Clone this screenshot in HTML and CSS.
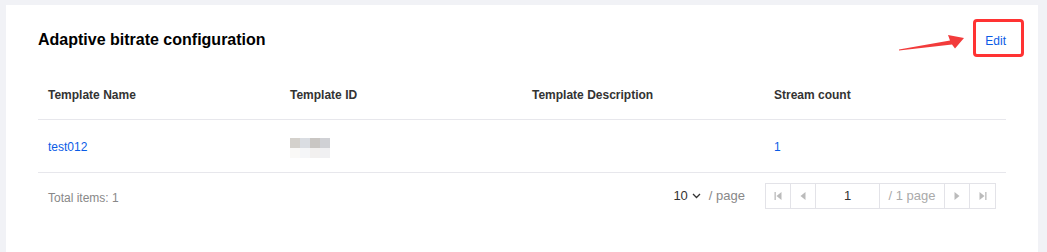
FILE: index.html
```html
<!DOCTYPE html>
<html>
<head>
<meta charset="utf-8">
<link rel="stylesheet" href="styles.css">
</head>
<body>
<div class="card">
  <div class="card-head">
    <h2 class="title">Adaptive bitrate configuration</h2>
    <a class="edit" href="#">Edit</a>
    <div class="mark-box"></div>
    <svg class="mark-arrow" width="70" height="24" viewBox="0 0 70 24">
      <polygon points="0,16.5 51,7.5 49,2 65,5 56,15.5 53,11.5 0,17.5" fill="#f23b3b"/>
    </svg>
  </div>
  <table class="tbl">
    <thead>
      <tr><th>Template Name</th><th>Template ID</th><th>Template Description</th><th>Stream count</th></tr>
    </thead>
    <tbody>
      <tr>
        <td><a class="link" href="#">test012</a></td>
        <td><span class="mosaic"><i class="m1"></i><i class="m2"></i><i class="m3"></i><i class="m4"></i><i class="m5"></i><i class="m6"></i><i class="m7"></i><i class="m8"></i></span></td>
        <td></td>
        <td><a class="link" href="#">1</a></td>
      </tr>
    </tbody>
  </table>
  <div class="footer">
    <span class="total">Total items: 1</span>
    <div class="pager">
      <span class="size">10 <svg width="9" height="6" viewBox="0 0 9 6"><path d="M1 1l3.5 3.5L8 1" stroke="#333" stroke-width="1.3" fill="none"/></svg></span>
      <span class="per">/ page</span>
      <div class="pbox">
        <span class="pbtn"><svg width="8" height="8" viewBox="0 0 8 8"><rect x="0.5" y="0" width="1.3" height="8" fill="#bbb"/><polygon points="7.5,0 7.5,8 2.5,4" fill="#bbb"/></svg></span>
        <span class="pbtn"><svg width="6" height="8" viewBox="0 0 6 8"><polygon points="5.5,0 5.5,8 0.5,4" fill="#bbb"/></svg></span>
        <span class="pinput">1</span>
        <span class="ptotal">/ 1 page</span>
        <span class="pbtn"><svg width="6" height="8" viewBox="0 0 6 8"><polygon points="0.5,0 0.5,8 5.5,4" fill="#bbb"/></svg></span>
        <span class="pbtn last"><svg width="8" height="8" viewBox="0 0 8 8"><polygon points="0.5,0 0.5,8 5.5,4" fill="#bbb"/><rect x="6.2" y="0" width="1.3" height="8" fill="#bbb"/></svg></span>
      </div>
    </div>
  </div>
</div>
</body>
</html>
```

FILE: styles.css
```css
* { box-sizing: border-box; }
html, body { margin: 0; padding: 0; }
body {
  background: #f1f2f6;
  font-family: "Liberation Sans", Arial, sans-serif;
  font-size: 12px;
  color: #333;
  width: 1047px;
  height: 252px;
  overflow: hidden;
}
.card {
  margin: 5px 0 0 6px;
  width: 1032px;
  height: 247px;
  background: #fff;
  padding: 14px 32px 0 32px;
}
.card-head {
  position: relative;
  height: 38px;
  display: flex;
  align-items: center;
  justify-content: space-between;
}
.title {
  margin: 4px 0 0 0;
  font-size: 16px;
  font-weight: bold;
  color: #000;
  line-height: 24px;
}
.edit {
  color: #0a5ce6;
  text-decoration: none;
  font-size: 12px;
  margin-top: 6px;
}
.mark-box {
  position: absolute;
  right: -18px;
  top: 0;
  width: 51px;
  height: 38px;
  border: 3px solid #f33;
  border-radius: 4px;
}
.mark-arrow {
  position: absolute;
  left: 861px;
  top: 14px;
}
.tbl {
  margin-top: 14px;
  width: 968px;
  border-collapse: collapse;
  table-layout: fixed;
}
.tbl th, .tbl td {
  text-align: left;
  padding: 0 10px;
  width: 242px;
}
.tbl th {
  height: 48px;
  font-weight: bold;
  color: #333;
  border-bottom: 1px solid #e7e7ec;
}
.tbl td {
  height: 53px;
  border-bottom: 1px solid #e7e7ec;
  padding-top: 3px;
}
.link { color: #0a5ce6; text-decoration: none; }
.mosaic {
  display: grid;
  grid-template-columns: repeat(4, 10px);
  grid-template-rows: 10px 10px;
  width: 40px;
  margin-top: 1px;
}
.mosaic i { display: block; }
.m1 { background: #d4d1cc; }
.m2 { background: #dadde2; }
.m3 { background: #c9c6c3; }
.m4 { background: #d0d1d5; }
.m5 { background: #faf9f7; }
.m6 { background: #f5f6f8; }
.m7 { background: #f2f0ef; }
.m8 { background: #f0f0f2; }
.footer {
  width: 968px;
  display: flex;
  justify-content: space-between;
  align-items: center;
  padding: 10px 10px 0 10px;
}
.total { color: #888; margin-top: 5px; }
.pager { display: flex; align-items: center; }
.size { color: #333; display: flex; align-items: center; gap: 4px; margin-right: 8px; font-size: 13px; }
.per { color: #888; margin-right: 20px; font-size: 13px; }
.pbox {
  display: flex;
  height: 26px;
  border: 1px solid #e3e3e8;
}
.pbox > span {
  display: flex;
  align-items: center;
  justify-content: center;
  border-right: 1px solid #e3e3e8;
}
.pbox > span.last { border-right: none; }
.pbtn { width: 25px; }
.pinput { width: 64px; font-size: 13px; color: #333; }
.ptotal { width: 65px; color: #aaa; font-size: 13px; }
```
